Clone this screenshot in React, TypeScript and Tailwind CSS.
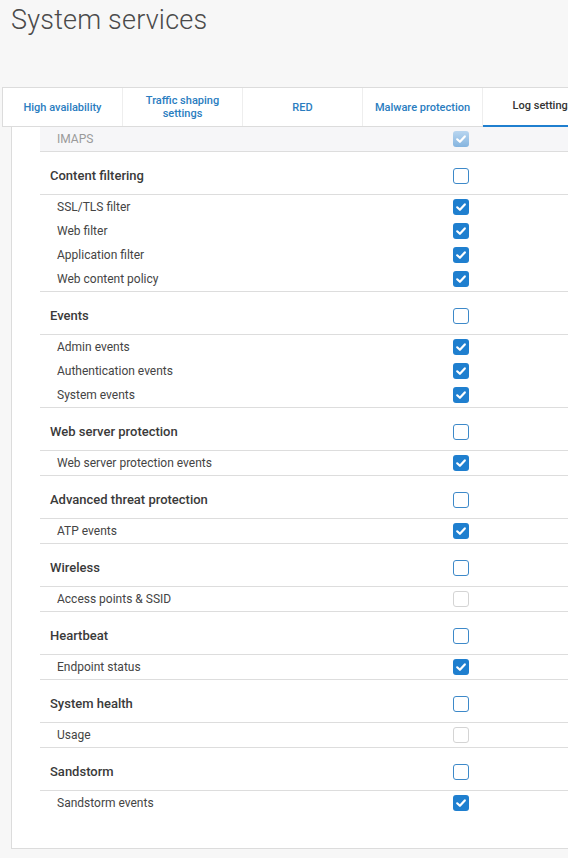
import React from "react";

type Kind = "on" | "off" | "disOff" | "disOn";

function Check({ kind }: { kind: Kind }) {
  const tick = (
    <svg width="12" height="12" viewBox="0 0 12 12" className="block">
      <path d="M2.2 6.3 L4.9 8.8 L9.8 3.4" fill="none" stroke="#fff" strokeWidth="2.2" strokeLinecap="round" strokeLinejoin="round" />
    </svg>
  );
  if (kind === "on")
    return <div className="w-[16px] h-[16px] rounded-[3px] bg-[#1f7fcf] flex items-center justify-center">{tick}</div>;
  if (kind === "disOn")
    return (
      <div className="w-[16px] h-[16px] rounded-[3px] bg-gradient-to-b from-[#b9d6f0] to-[#84b4df] flex items-center justify-center">
        {tick}
      </div>
    );
  if (kind === "disOff")
    return <div className="w-[16px] h-[16px] rounded-[3px] border-[1.5px] border-[#d4d4d4] bg-white" />;
  return <div className="w-[16px] h-[16px] rounded-[3px] border-[1.5px] border-[#3d89c9] bg-white" />;
}

type Group = { title: string; items: { label: string; kind: Kind }[] };

const groups: Group[] = [
  {
    title: "Content filtering",
    items: [
      { label: "SSL/TLS filter", kind: "on" },
      { label: "Web filter", kind: "on" },
      { label: "Application filter", kind: "on" },
      { label: "Web content policy", kind: "on" },
    ],
  },
  {
    title: "Events",
    items: [
      { label: "Admin events", kind: "on" },
      { label: "Authentication events", kind: "on" },
      { label: "System events", kind: "on" },
    ],
  },
  { title: "Web server protection", items: [{ label: "Web server protection events", kind: "on" }] },
  { title: "Advanced threat protection", items: [{ label: "ATP events", kind: "on" }] },
  { title: "Wireless", items: [{ label: "Access points & SSID", kind: "disOff" }] },
  { title: "Heartbeat", items: [{ label: "Endpoint status", kind: "on" }] },
  { title: "System health", items: [{ label: "Usage", kind: "disOff" }] },
  { title: "Sandstorm", items: [{ label: "Sandstorm events", kind: "on" }] },
];

const tabs = ["High availability", "Traffic shaping settings", "RED", "Malware protection"];

export default function App() {
  return (
    <div
      className="w-[568px] h-[858px] overflow-hidden bg-[#f7f7f7] flex flex-col"
      style={{ fontFamily: "Roboto, 'Open Sans', sans-serif" }}
    >
      <div className="pl-[11px] pt-[2px] h-[87px] text-[27px] leading-[36px] font-light text-[#4a4a4a] tracking-[0.2px]">
        System services
      </div>
      <div className="ml-[2px] w-[700px] h-[40px] shrink-0 flex bg-white border border-[#dcdcdc]">
        {tabs.map((t) => (
          <div
            key={t}
            className="w-[120px] shrink-0 border-r border-[#eeeeee] flex items-center justify-center text-center px-[6px] text-[11px] leading-[13px] font-medium text-[#2a7dbf]"
          >
            <span className={t === "Traffic shaping settings" ? "w-[90px]" : "whitespace-nowrap"}>{t}</span>
          </div>
        ))}
        <div className="w-[120px] shrink-0 flex items-center justify-center text-[11px] font-medium text-[#333] border-b-2 border-[#1f7fcf] -mb-px">
          Log settings
        </div>
      </div>
      <div className="ml-[11px] w-[600px] h-[722px] shrink-0 bg-white border-l border-b border-[#dcdcdc] pl-[28px]">
        <div className="h-[25px] bg-[#f6f6f8] border-b border-[#dddddd] flex items-center">
          <div className="w-[413px] pl-[17px] text-[12px] text-[#9a9a9a]">IMAPS</div>
          <Check kind="disOn" />
        </div>
        {groups.map((g, gi) => (
          <div key={g.title}>
            <div className="h-[43px] border-b border-[#dddddd] flex items-start pt-[16px]">
              <div className="w-[413px] pl-[10px] text-[13px] leading-[16px] font-medium text-[#3a3a3a]">{g.title}</div>
              <Check kind="off" />
            </div>
            <div className={gi === groups.length - 1 ? "" : "border-b border-[#dddddd]"}>
              {g.items.map((it) => (
                <div key={it.label} className="h-[24px] flex items-center">
                  <div className="w-[413px] pl-[17px] text-[12px] text-[#444]">{it.label}</div>
                  <Check kind={it.kind} />
                </div>
              ))}
            </div>
          </div>
        ))}
      </div>
    </div>
  );
}
